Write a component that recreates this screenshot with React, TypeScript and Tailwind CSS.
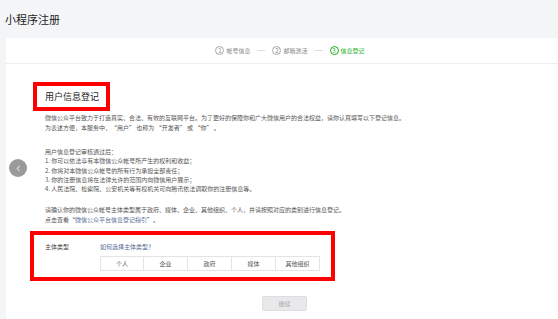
import React from 'react';

const steps = [
    { n: '1', label: '帐号信息', active: false },
    { n: '2', label: '邮箱激活', active: false },
    { n: '3', label: '信息登记', active: true },
];

const types = ['个人', '企业', '政府', '媒体', '其他组织'];

const App: React.FC = () => {
    return (
        <div className="w-[558px] h-[319px] overflow-hidden bg-[#f4f5f7] font-['Noto_Sans_CJK_SC',sans-serif] text-[#333]">
            <div className="h-[38px] pl-[5px] flex items-center text-[11px] text-[#222]">小程序注册</div>

            <div className="ml-[6px] h-[281px] bg-white flex flex-col">
                {/* steps */}
                <div className="h-[26px] shrink-0 border-b border-[#eeeeee] flex items-center justify-center pl-[16px] text-[6px] leading-none text-[#888]">
                    {steps.map((s, i) => (
                        <React.Fragment key={s.n}>
                            {i > 0 && <span className="w-[8px] h-px bg-[#ddd] mx-[7px]" />}
                            <span className={`flex items-center gap-[2px] ${s.active ? 'text-[#1aad19]' : ''}`}>
                                <span
                                    className={`w-[9px] h-[9px] rounded-full border flex items-center justify-center text-[6px] ${
                                        s.active ? 'border-[#1aad19]' : 'border-[#aaa]'
                                    }`}
                                >
                                    {s.n}
                                </span>
                                <span>{s.label}</span>
                            </span>
                        </React.Fragment>
                    ))}
                </div>

                {/* body */}
                <div className="relative flex-1 pl-[27px] pt-[18px]">
                    <button className="absolute left-[3px] top-[95px] w-[18px] h-[18px] rounded-full bg-[#9a9a9a] flex items-center justify-center">
                        <svg width="7" height="7" viewBox="0 0 10 10" fill="none" stroke="white" strokeWidth="1.4">
                            <path d="M6.5 1.5 L3 5 L6.5 8.5" />
                        </svg>
                    </button>

                    <div className="w-[77px] h-[29px] border-[4px] border-[#ff0000] flex items-center pl-[8px] text-[9px] text-[#222]">
                        用户信息登记
                    </div>

                    <div className="pl-[12px] text-[6px] text-[#555] leading-[10px]">
                        <p className="mt-[2px]">
                            微信公众平台致力于打造真实、合法、有效的互联网平台。为了更好的保障你和广大微信用户的合法权益，请你认真填写以下登记信息。
                            <br />
                            为表述方便，本服务中，“用户” 也称为 “开发者” 或 “你” 。
                        </p>
                        <div className="mt-[14px] leading-[9.3px]">
                            <p>用户信息登记审核通过后：</p>
                            <p>1. 你可以依法享有本微信公众帐号所产生的权利和收益；</p>
                            <p>2. 你将对本微信公众帐号的所有行为承担全部责任；</p>
                            <p>3. 你的注册信息将在法律允许的范围内向微信用户展示；</p>
                            <p>4. 人民法院、检察院、公安机关等有权机关可向腾讯依法调取你的注册信息等。</p>
                        </div>
                        <p className="mt-[12px] leading-[9.5px]">
                            请确认你的微信公众帐号主体类型属于政府、媒体、企业、其他组织、个人，并请按照对应的类别进行信息登记。
                            <br />
                            点击查看“<span className="text-[#576b95]">微信公众平台信息登记指引</span>”。
                        </p>
                    </div>

                    <div className="-ml-[3px] mt-[7px] w-[305px] h-[50px] border-[4px] border-[#ff0000] pt-[8px] pl-[11px] text-[6px] leading-[8px]">
                        <div className="flex">
                            <span className="w-[55px] text-[#444]">主体类型</span>
                            <span className="text-[#576b95]">如何选择主体类型？</span>
                        </div>
                        <div className="ml-[55px] mt-[5px] flex">
                            {types.map((t, i) => (
                                <div
                                    key={t}
                                    className={`w-[44px] h-[15px] border border-[#e4e4e4] flex items-center justify-center text-[#555] ${
                                        i > 0 ? 'border-l-0' : ''
                                    }`}
                                >
                                    {t}
                                </div>
                            ))}
                        </div>
                    </div>

                    <div className="ml-[229px] mt-[15px] w-[45px] h-[15px] rounded-[2px] bg-[#e9e9ec] border border-[#dedede] flex items-center justify-center text-[6px] text-[#aaa]">
                        继续
                    </div>
                </div>
            </div>
        </div>
    );
};

export default App;
